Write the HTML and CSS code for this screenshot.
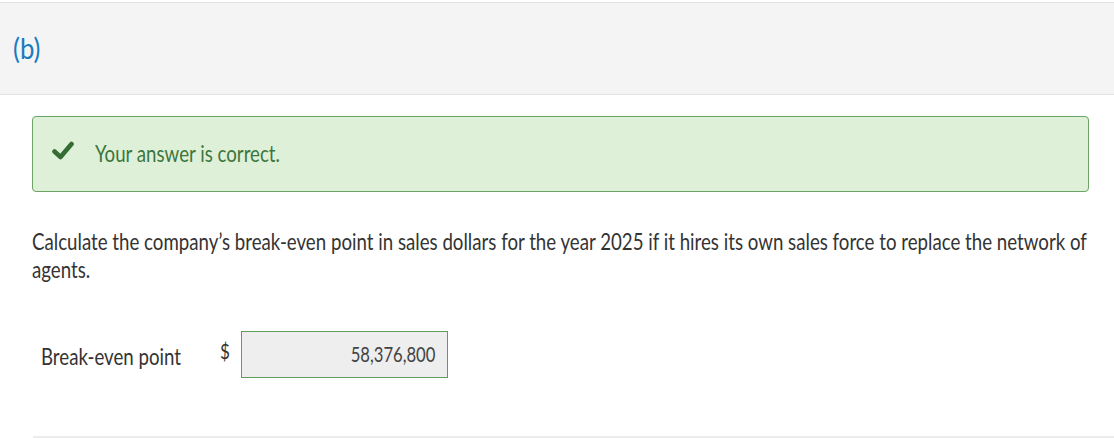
FILE: index.html
```html
<!DOCTYPE html>
<html>
<head>
<meta charset="utf-8">
<link rel="stylesheet" href="styles.css">
</head>
<body>
<div class="part-header"><span class="part-label">(b)</span></div>
<div class="content">
  <div class="alert">
    <svg class="check" viewBox="0 0 22 20" width="22" height="20"><path d="M2.5 11.5 L8.5 17 L19.5 4" fill="none" stroke="#336d33" stroke-width="4.6" stroke-linecap="round" stroke-linejoin="round"/></svg>
    <span class="alert-text narrow">Your answer is correct.</span>
  </div>
  <div class="question-wrap">
    <p class="question">Calculate the company’s break-even point in sales dollars for the year 2025 if it hires its own sales force to replace the network of agents.</p>
  </div>
  <div class="answer-row">
    <div class="answer-label"><span class="narrow">Break-even point</span></div>
    <span class="currency narrow">$</span>
    <div class="answer-input"><span class="answer-value">58,376,800</span></div>
  </div>
  <div class="divider"></div>
</div>
</body>
</html>
```
FILE: styles.css
```css
:root {
  --sx: 0.812;
}
html, body {
  margin: 0;
  padding: 0;
  background: #fff;
  font-family: Lato, "Liberation Sans", sans-serif;
  color: #333;
  overflow: hidden;
}
body {
  padding-top: 2px;
}
.narrow {
  display: inline-block;
  transform: scaleX(var(--sx));
  transform-origin: left center;
  white-space: nowrap;
}
.part-header {
  background: #f4f4f4;
  border-top: 1px solid #e2e2e2;
  border-bottom: 1px solid #e2e2e2;
  height: 91px;
  display: flex;
  align-items: center;
  padding-left: 13px;
}
.part-label {
  display: inline-block;
  color: #1a7bbf;
  font-size: 28px;
  margin-top: -2px;
  transform: scaleX(0.92);
  transform-origin: left center;
}
.content {
  padding: 21px 25px 0 32px;
}
.alert {
  background: #dff0d8;
  border: 1px solid #6aa466;
  border-radius: 4px;
  height: 76px;
  box-sizing: border-box;
  display: flex;
  align-items: center;
  padding-left: 19px;
}
.check {
  display: block;
  margin-top: -9px;
}
.alert-text {
  margin-left: 21px;
  color: #3c763d;
  font-size: 23px;
  line-height: 1.2;
}
.question-wrap {
  margin-top: 35px;
  height: 56px;
}
.question {
  margin: 0;
  width: 1300px;
  font-size: 23px;
  line-height: 28px;
  color: #333;
  transform: scaleX(var(--sx));
  transform-origin: left top;
}
.answer-row {
  display: flex;
  align-items: flex-start;
  margin-top: 48px;
  padding-left: 9px;
}
.answer-label {
  font-size: 23px;
  line-height: 1.2;
  width: 179px;
  margin-top: 12px;
}
.currency {
  font-size: 21px;
  line-height: 1.2;
  width: 21px;
  margin-top: 7px;
}
.answer-input {
  width: 207px;
  height: 47px;
  box-sizing: border-box;
  background: #eeeeee;
  border: 1px solid #5f9d5b;
  text-align: right;
  padding-right: 12px;
  font-size: 20.5px;
  line-height: 45px;
  color: #444;
}
.answer-value {
  display: inline-block;
  transform: scaleX(var(--sx));
  transform-origin: right center;
}
.divider {
  margin-top: 58px;
  height: 2px;
  background: #ececec;
  margin-left: 1px;
  margin-right: -25px;
}
```
